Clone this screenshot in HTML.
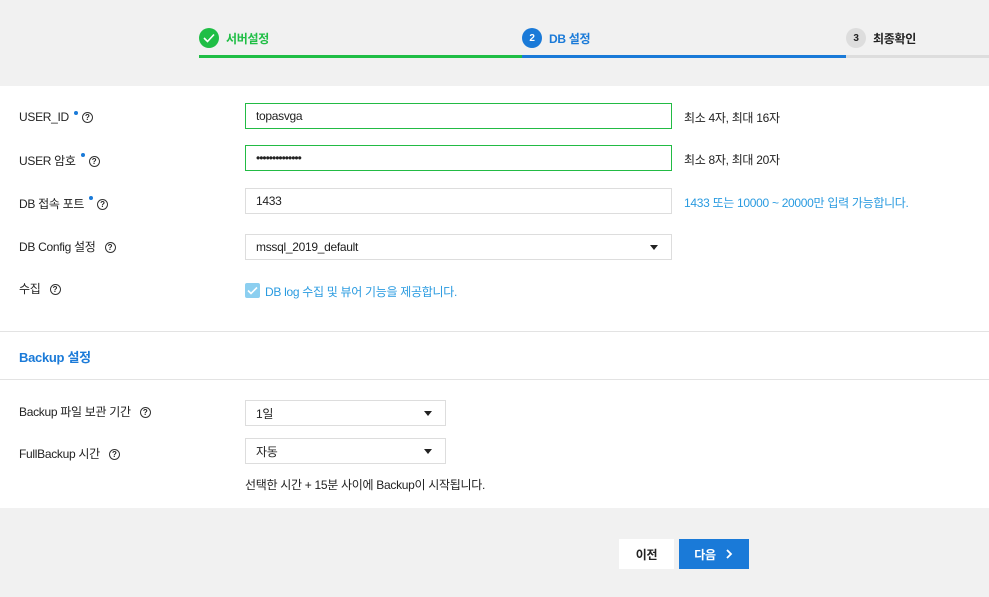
<!DOCTYPE html><html><head><meta charset="utf-8"><style>
*{box-sizing:border-box;margin:0;padding:0}
body{width:989px;height:597px;background:#f1f1f1;font-family:"Liberation Sans","Noto Sans CJK KR",sans-serif;font-size:12px;color:#222;position:relative;overflow:hidden;letter-spacing:-0.3px}
.a{position:absolute}
.step{font-weight:bold;font-size:12px;display:flex;align-items:center}
.circ{width:20px;height:20px;border-radius:50%;display:inline-flex;align-items:center;justify-content:center;color:#fff;font-size:10px;margin-right:7px}
.white{background:#fff;left:0;width:989px}
.q{display:inline-block;width:11px;height:11px;border:1.3px solid #333;border-radius:50%;font-size:8px;line-height:9px;text-align:center;font-weight:bold;vertical-align:middle;margin-left:4px;letter-spacing:0}
.dot{display:inline-block;width:4px;height:4px;border-radius:50%;background:#1a7ad8;vertical-align:top;margin-left:5px;margin-top:1px}
.inp{position:absolute;background:#fff;border:1px solid #ddd;padding-left:10px;display:flex;align-items:center;font-size:12px}
.g{border-color:#22bb44}
.sel::after{content:"";position:absolute;right:13px;top:50%;margin-top:-2px;border:4px solid transparent;border-top:5px solid #222;border-bottom:0}
.lbl{position:absolute;left:19px;font-size:12px}
</style></head><body>
<div class="a step" style="left:199px;top:28px;color:#1fbe45"><span class="circ" style="background:#1fbe45"><svg width="12" height="10"><path d="M1 5l3.5 3.5L11 1.5" stroke="#fff" stroke-width="1.6" fill="none"/></svg></span>서버설정</div>
<div class="a step" style="left:522px;top:28px;color:#1a7ad8"><span class="circ" style="background:#1a7ad8">2</span>DB 설정</div>
<div class="a step" style="left:846px;top:28px;color:#222"><span class="circ" style="background:#ddd;color:#222">3</span>최종확인</div>
<div class="a" style="left:199px;top:55px;width:323px;height:3px;background:#1fbe45"></div>
<div class="a" style="left:522px;top:55px;width:324px;height:3px;background:#1a7ad8"></div>
<div class="a" style="left:846px;top:55px;width:143px;height:3px;background:#ddd"></div>
<div class="a white" style="top:86px;height:245px"></div>
<div class="a white" style="top:332px;height:47px"></div>
<div class="a white" style="top:380px;height:128px"></div>
<div class="a" style="left:0;top:331px;width:989px;height:1px;background:#e3e3e3"></div>
<div class="a" style="left:0;top:379px;width:989px;height:1px;background:#e3e3e3"></div>
<div class="lbl" style="top:110px">USER_ID<span class="dot"></span><span class="q">?</span></div>
<div class="lbl" style="top:152px">USER 암호<span class="dot"></span><span class="q">?</span></div>
<div class="lbl" style="top:195px">DB 접속 포트<span class="dot"></span><span class="q">?</span></div>
<div class="lbl" style="top:238px">DB Config 설정 <span class="q" style="margin-left:6px">?</span></div>
<div class="lbl" style="top:280px">수집 <span class="q" style="margin-left:6px">?</span></div>
<div class="inp g" style="left:245px;top:103px;width:427px;height:26px">topasvga</div>
<div class="inp g" style="left:245px;top:145px;width:427px;height:26px;letter-spacing:-1px">••••••••••••••</div>
<div class="inp" style="left:245px;top:188px;width:427px;height:26px">1433</div>
<div class="inp sel" style="left:245px;top:234px;width:427px;height:26px">mssql_2019_default</div>
<div class="a" style="left:684px;top:109px">최소 4자, 최대 16자</div>
<div class="a" style="left:684px;top:151px">최소 8자, 최대 20자</div>
<div class="a" style="left:684px;top:194px;color:#2a9be0">1433 또는 10000 ~ 20000만 입력 가능합니다.</div>
<div class="a" style="left:245px;top:283px;width:15px;height:15px;background:#8ccff0;border-radius:2px"><svg width="15" height="15"><path d="M3 7.5l3 3 6-6" stroke="#fff" stroke-width="1.6" fill="none"/></svg></div>
<div class="a" style="left:265px;top:283px;color:#2a9be0">DB log 수집 및 뷰어 기능을 제공합니다.</div>
<div class="a" style="left:19px;top:347px;color:#1a7ad8;font-weight:bold;font-size:13px">Backup 설정</div>
<div class="lbl" style="top:403px">Backup 파일 보관 기간 <span class="q" style="margin-left:6px">?</span></div>
<div class="lbl" style="top:445px">FullBackup 시간 <span class="q" style="margin-left:6px">?</span></div>
<div class="inp sel" style="left:245px;top:400px;width:201px;height:26px">1일</div>
<div class="inp sel" style="left:245px;top:438px;width:201px;height:26px">자동</div>
<div class="a" style="left:245px;top:476px">선택한 시간 + 15분 사이에 Backup이 시작됩니다.</div>
<div class="a" style="left:619px;top:539px;width:55px;height:30px;background:#fff;display:flex;align-items:center;justify-content:center;font-weight:bold">이전</div>
<div class="a" style="left:679px;top:539px;width:70px;height:30px;background:#1a7ad8;color:#fff;display:flex;align-items:center;justify-content:center;font-weight:bold">다음 <svg width="10" height="12" style="margin-left:8px"><path d="M3 2l4 4-4 4" stroke="#fff" stroke-width="1.8" fill="none"/></svg></div>
</body></html>
